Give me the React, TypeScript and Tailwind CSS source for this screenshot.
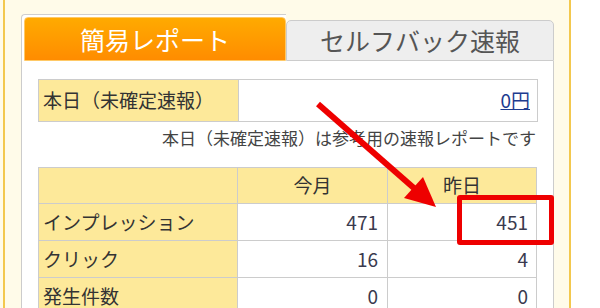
const font = { fontFamily: '"Noto Sans CJK JP", "Noto Sans", sans-serif' };

const rows = [
  { label: "インプレッション", month: "471", yesterday: "451" },
  { label: "クリック", month: "16", yesterday: "4" },
  { label: "発生件数", month: "0", yesterday: "0" },
];

export default function App() {
  return (
    <div
      className="relative flex h-[308px] w-[600px] overflow-hidden bg-white text-[#333]"
      style={font}
    >
      {/* cream page area */}
      <div className="h-full w-[571px] bg-[#fffbe9] pl-[3px]">
        <div className="h-full border-x-2 border-[#f3c84e] pl-[16px] pr-[15px] pt-[14px]">
          {/* tabs */}
          <div className="flex h-[47px] items-end">
            <div className="h-[47px] w-[265px] rounded-tl-[4px] border-l border-t border-[#cfcfcf] bg-white pl-[2px] pt-[2px]">
              <div className="flex h-[44px] items-center justify-center rounded-t-[4px] border border-[#ffc966] bg-gradient-to-b from-[#ffaa00] to-[#ff8c00] text-[25px] leading-none text-white">
                簡易レポート
              </div>
            </div>
            <div className="flex h-[41px] flex-1 items-center justify-center rounded-t-[5px] border border-[#cccccc] bg-[#eeeeee] text-[25px] leading-none text-[#555]">
              セルフバック速報
            </div>
          </div>

          {/* panel body */}
          <div className="h-[260px] border-x border-[#cccccc] bg-white pl-[16px] pr-[15px] pt-[18px]">
            <div className="flex h-[43px] border border-[#cccccc] text-[19px]">
              <div className="flex w-[199px] items-center bg-[#fde99a] pl-[4px]">
                本日（未確定速報）
              </div>
              <div className="flex flex-1 items-center justify-end border-l border-[#cccccc] pr-[7px]">
                <a href="#" className="text-[#1d3b8f] underline">
                  0円
                </a>
              </div>
            </div>

            <div className="flex h-[45px] justify-end pr-[2px] pt-[6px] text-[17px] leading-[20px] text-[#444]">
              本日（未確定速報）は参考用の速報レポートです
            </div>

            <table className="w-[499px] border-collapse text-[19px]">
              <thead>
                <tr className="h-[36px] bg-[#fde99a]">
                  <th className="w-[199px] border border-[#cccccc]"></th>
                  <th className="w-[150px] border border-[#cccccc] font-normal">今月</th>
                  <th className="border border-[#cccccc] font-normal">昨日</th>
                </tr>
              </thead>
              <tbody>
                {rows.map((r) => (
                  <tr key={r.label} className="h-[37px]">
                    <td className="border border-[#cccccc] bg-[#fde99a] pl-[4px]">{r.label}</td>
                    <td className="border border-[#cccccc] pr-[9px] text-right text-[#3a3a4e]">
                      {r.month}
                    </td>
                    <td className="border border-[#cccccc] pr-[8px] text-right text-[#3a3a4e]">
                      {r.yesterday}
                    </td>
                  </tr>
                ))}
              </tbody>
            </table>
          </div>
        </div>
      </div>

      {/* red highlight box */}
      <div className="absolute left-[457px] top-[195px] h-[50px] w-[97px] rounded-[3px] border-[5px] border-[#ee0000]" />

      {/* red arrow */}
      <svg className="absolute left-0 top-0" width="600" height="308">
        <line x1="318" y1="104" x2="415" y2="189" stroke="#ee0000" strokeWidth="6" />
        <polygon points="436,207 404,198 423,177" fill="#ee0000" />
      </svg>
    </div>
  );
}
